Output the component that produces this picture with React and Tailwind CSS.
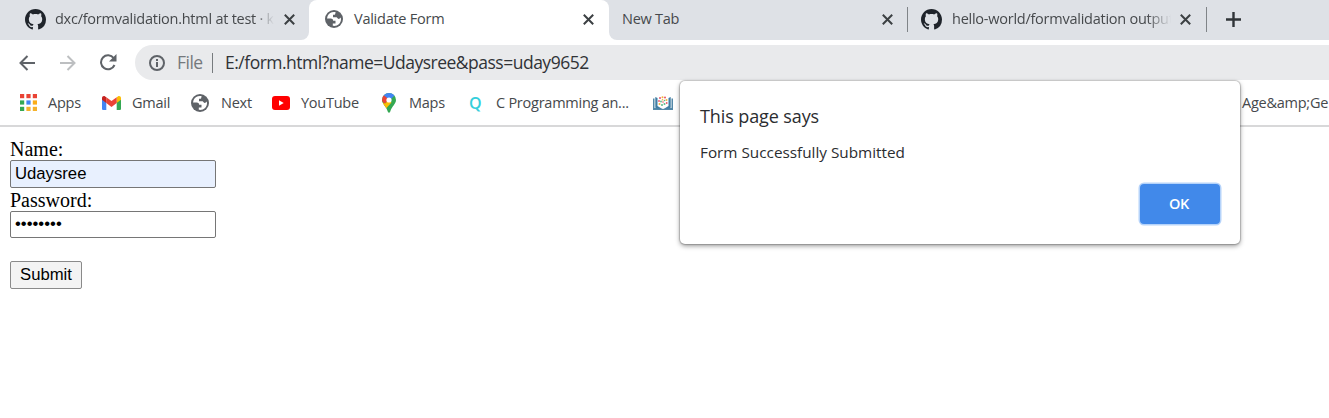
import React from 'react';

const ui = "font-['Open_Sans',sans-serif]";

function Octocat() {
  return (
    <svg className="size-[21px] shrink-0" viewBox="0 0 16 16" fill="#1f242b">
      <path d="M8 0C3.58 0 0 3.58 0 8c0 3.54 2.29 6.53 5.47 7.59.4.07.55-.17.55-.38 0-.19-.01-.82-.01-1.49-2.01.37-2.53-.49-2.69-.94-.09-.23-.48-.94-.82-1.13-.28-.15-.68-.52-.01-.53.63-.01 1.08.58 1.23.82.72 1.21 1.87.87 2.33.66.07-.52.28-.87.51-1.07-1.78-.2-3.64-.89-3.64-3.95 0-.87.31-1.59.82-2.15-.08-.2-.36-1.02.08-2.12 0 0 .67-.21 2.2.82.64-.18 1.32-.27 2-.27s1.36.09 2 .27c1.53-1.04 2.2-.82 2.2-.82.44 1.1.16 1.92.08 2.12.51.56.82 1.27.82 2.15 0 3.07-1.87 3.75-3.65 3.95.29.25.54.73.54 1.48 0 1.07-.01 1.93-.01 2.2 0 .21.15.46.55.38A8.01 8.01 0 0 0 16 8c0-4.42-3.58-8-8-8z" />
    </svg>
  );
}

function Globe() {
  return (
    <svg className="size-[18px] shrink-0" viewBox="0 0 18 18">
      <circle cx="9" cy="9" r="9" fill="#5f6368" />
      <path d="M10.6 2.1C7.5 1.3 4 2.7 2.6 6L2 8.6H5.6C7.5 8.6 8.2 9.6 8.1 10.8H10.5V13.4H7.8V15.8C12.6 16.5 16 13 16 9.2L15.8 7.6C14.5 9.3 13.3 9.3 12.6 8.2L11.7 7.3H8V4.7H9.7C10.6 4.4 10.2 3.2 10.6 2.1Z" fill="#fff" />
    </svg>
  );
}

function Close() {
  return (
    <svg className="size-[11px] shrink-0" viewBox="0 0 11 11" stroke="#3c4043" strokeWidth="2">
      <path d="M.8.8l9.4 9.4M10.2.8L.8 10.2" />
    </svg>
  );
}

function AppsGrid() {
  const colors = ['#e94335', '#e94335', '#e94335', '#34a853', '#4285f4', '#fbad18', '#34a853', '#f5b22c', '#f5b22c'];
  return (
    <svg className="size-[17px] shrink-0" viewBox="0 0 17 17">
      {colors.map((c, i) => (
        <rect key={i} x={(i % 3) * 6.4} y={Math.floor(i / 3) * 6.4} width="4.2" height="4.2" fill={c} />
      ))}
    </svg>
  );
}

function Gmail() {
  return (
    <svg className="h-[14px] w-[19px] shrink-0" viewBox="0 0 19 14">
      <path d="M0 2v10.7C0 13.4.6 14 1.3 14H4.3V5z" fill="#4285f4" />
      <path d="M19 2v10.7c0 .7-.6 1.3-1.3 1.3H14.7V5z" fill="#34a853" />
      <path d="M14.7 1.2V7L19 3.7V2c0-1.7-1.8-2.5-3.1-1.6z" fill="#fbbc04" />
      <path d="M4.3 7V1.2L9.5 5.1l5.2-3.9V7L9.5 10.9z" fill="#ea4335" />
      <path d="M0 2v1.7L4.3 7V1.2L3.1.4C1.8-.5 0 .3 0 2z" fill="#c5221f" />
    </svg>
  );
}

function YouTube() {
  return (
    <svg className="h-[14px] w-[18px] shrink-0" viewBox="0 0 18 14">
      <rect width="18" height="14" rx="3" fill="#f00" />
      <path d="M7 4.3l4.7 2.7L7 9.7z" fill="#fff" />
    </svg>
  );
}

function MapPin() {
  return (
    <svg className="h-[20px] w-[14px] shrink-0" viewBox="0 0 14 20">
      <defs>
        <clipPath id="pin">
          <path d="M7 0a7 7 0 0 1 7 7c0 4-4.5 6.5-5.7 11.5Q7 21 5.7 18.5C4.5 13.5 0 11 0 7a7 7 0 0 1 7-7z" />
        </clipPath>
      </defs>
      <g clipPath="url(#pin)">
        <path d="M0 0h14v20H0z" fill="#34a853" />
        <path d="M1 2L3 0h10v2L7 8z" fill="#4285f4" />
        <path d="M0 8V3l1.8-.8L7 6.5 2.5 11z" fill="#ea4335" />
        <path d="M0 9.5L3 10.5 7 7l2.5 2.5-6 6.5z" fill="#fbbc04" />
      </g>
      <circle cx="7" cy="7" r="2.6" fill="#fff" />
    </svg>
  );
}

function BookIcon() {
  return (
    <svg className="h-[14px] w-[20px] shrink-0" viewBox="0 0 20 14">
      <path d="M0 2.500h1.500v9.500h6l2.500 1 2.500-1h6V2.500H20V14H0z" fill="#5488a8" />
      <path d="M2.300 1l2.200 1v8l4 2.500H3.300l-1-1zM17.700 1l-2.200 1v8l-4 2.500h5.200l1-1z" fill="#3e7da3" />
      <g fill="#e8546a"><circle cx="7" cy="2" r="1" /><circle cx="12" cy="1.5" r="1" /><circle cx="6" cy="5" r=".9" /><circle cx="13.7" cy="7" r=".9" /><circle cx="10" cy="6" r=".8" /></g>
      <g fill="#f2b53b"><circle cx="9.5" cy="1.200" r="1" /><circle cx="6.5" cy="8" r="1" /><circle cx="13.5" cy="4" r="1" /><circle cx="9.5" cy="3.700" r=".8" /></g>
      <g fill="#5bb98b"><circle cx="8" cy="5.5" r=".9" /><circle cx="11.5" cy="8" r="1" /><circle cx="9" cy="9" r="1" /><circle cx="11.5" cy="4.500" r=".8" /></g>
    </svg>
  );
}

export default function App() {
  return (
    <div className={`relative h-[418px] w-[1329px] overflow-hidden bg-white text-[#46494c] ${ui}`}>
      <div className="flex h-10 bg-white text-[14.5px] tracking-[-0.25px] whitespace-nowrap">
        <div className="flex w-[309px] items-center rounded-br-[8px] bg-[#dee1e6] pr-[14px] pb-[2px] pl-[25px]">
          <Octocat />
          <span className="ml-[9px] w-[222px] overflow-hidden [mask-image:linear-gradient(to_right,black_200px,transparent_219px)]">dxc/formvalidation.html at test · k</span>
          <span className="ml-auto"><Close /></span>
        </div>
        <div className="flex w-[300px] items-center bg-[#dee1e6]">
          <div className="flex h-10 w-[300px] items-center rounded-t-[8px] bg-white pr-[15px] pb-[2px] pl-4">
            <Globe />
            <span className="ml-[11px]">Validate Form</span>
            <span className="ml-auto"><Close /></span>
          </div>
        </div>
        <div className="flex w-[298px] items-center rounded-bl-[8px] bg-[#dee1e6] pr-[14px] pb-[2px] pl-[13px]">
          <span>New Tab</span>
          <span className="ml-auto"><Close /></span>
        </div>
        <div className="flex w-[299px] items-center bg-[#dee1e6] pr-[15px] pb-[2px]">
          <span className="h-[25px] w-px bg-[#808488]" />
          <span className="ml-[13px]"><Octocat /></span>
          <span className="ml-[10px] w-[221px] overflow-hidden [mask-image:linear-gradient(to_right,black_195px,transparent_219px)]">hello-world/formvalidation output</span>
          <span className="ml-auto"><Close /></span>
        </div>
        <div className="flex flex-1 items-center bg-[#dee1e6] pb-[2px]">
          <span className="h-[25px] w-px bg-[#808488]" />
          <svg className="ml-[19px] size-[15px]" viewBox="0 0 15 15" stroke="#303438" strokeWidth="2.4"><path d="M7.5 0v15M0 7.5h15" /></svg>
        </div>
      </div>

      <div className="flex h-[45px] items-center">
        <svg className="ml-[19px] size-4" viewBox="0 0 16 16" fill="none" stroke="#5f6368" strokeWidth="2"><path d="M16 8H1.5M8.5 1L1.5 8l7 7" /></svg>
        <svg className="ml-[25px] size-4" viewBox="0 0 16 16" fill="none" stroke="#bdbfc1" strokeWidth="2"><path d="M0 8h14.5M7.5 1l7 7-7 7" /></svg>
        <svg className="ml-[23px] h-[17px] w-[18px]" viewBox="0 0 18 17" fill="none" stroke="#5f6368" strokeWidth="2"><path d="M14.7 4.2A7 7 0 1 0 15.5 11" /><path d="M17.5 0v7.5H10z" fill="#5f6368" stroke="none" /></svg>
        <div className="ml-[18px] flex h-[35px] flex-1 items-center rounded-l-full bg-[#e9eaec] pl-[14px] text-[17.5px] tracking-[-0.5px] whitespace-nowrap">
          <svg className="size-4" viewBox="0 0 16 16" fill="none" stroke="#5f6368" strokeWidth="2"><circle cx="8" cy="8" r="7" /><path d="M8 7v5M8 4v2" /></svg>
          <span className="ml-[12px] w-[35px] text-[#75797d]">File</span>
          <span className="h-5 w-px bg-[#777b7e]" />
          <span className="ml-[12px] text-[#303337]">E:/form.html?name=Udaysree&amp;pass=uday9652</span>
        </div>
      </div>

      <div className="flex h-[42px] items-center border-b-2 border-[#d8d8d9] pb-[5px] pl-5 text-[14.5px] tracking-[-0.25px] whitespace-nowrap">
        <div className="flex w-[82px] shrink-0 items-center gap-[11px]"><AppsGrid /><span>Apps</span></div>
        <div className="flex w-[89px] shrink-0 items-center gap-[11px]"><Gmail /><span>Gmail</span></div>
        <div className="flex w-[81px] shrink-0 items-center gap-[12px]"><Globe /><span>Next</span></div>
        <div className="flex w-[110px] shrink-0 items-center gap-[11px]"><YouTube /><span>YouTube</span></div>
        <div className="flex w-[87px] shrink-0 items-center gap-[13px]"><MapPin /><span>Maps</span></div>
        <div className="flex w-[184px] shrink-0 items-center gap-[14px]"><span className="w-[13px] text-[16px] font-semibold text-[#36cfdc]">Q</span><span>C Programming an...</span></div>
        <BookIcon />
        <span className="ml-[569px] shrink-0">Age&amp;amp;Ge</span>
      </div>

      <form className="flex flex-col items-start pt-[11px] pl-[10px] font-['Liberation_Serif',serif] text-[20px] text-black" onSubmit={(e) => e.preventDefault()}>
        <label className="h-[22px] leading-[22px]">Name:</label>
        <input className="h-[28px] w-[206px] rounded-[2px] border border-[#767676] bg-[#e8f0fe] px-1 font-['Liberation_Sans',sans-serif] text-[16.7px]" defaultValue="Udaysree" />
        <label className="h-[23px] leading-[24px]">Password:</label>
        <input type="password" className="h-[27px] w-[206px] rounded-[2px] border border-[#767676] bg-white px-1 pb-[2px] font-['Liberation_Sans',sans-serif] text-[16.7px]" defaultValue="uday9652" />
        <button className="mt-[23px] h-[28px] w-[72px] rounded-[2px] border border-[#8a8a8a] bg-[#f3f3f3] font-['Liberation_Sans',sans-serif] text-[16.7px]">Submit</button>
      </form>

      <div className="absolute top-[81px] left-[680px] flex h-[163px] w-[560px] flex-col rounded-[5px] bg-white px-5 pt-[22px] text-[#2b2d30] shadow-[0_0_1px_1px_rgba(0,0,0,0.18),0_2px_5px_rgba(0,0,0,0.4)]">
        <h1 className="h-[26px] text-[18px] leading-[26px] tracking-[-0.1px]">This page says</h1>
        <p className="mt-[12px] h-[22px] text-[15.3px] leading-[22px]">Form Successfully Submitted</p>
        <button className="mt-[21px] h-10 w-20 self-end rounded-[4px] bg-[#4189ea] pr-[2px] text-[14.5px] font-semibold tracking-[-0.3px] text-white shadow-[0_0_0_1.5px_#b5d3fa]">OK</button>
      </div>
    </div>
  );
}
